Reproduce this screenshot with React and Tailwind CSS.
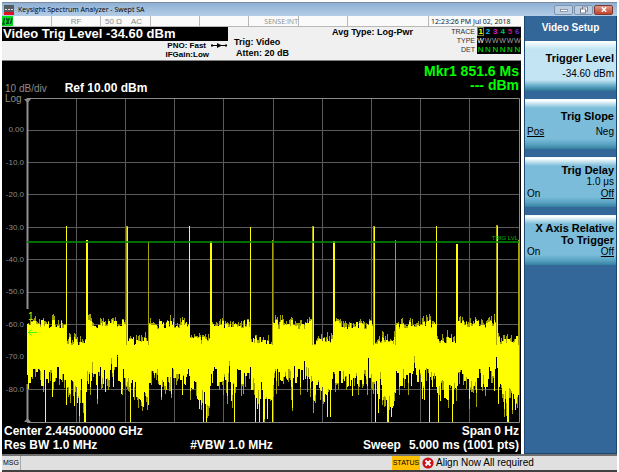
import React from "react";

const LEFT = 27;
const RIGHT = 519;
const TOP = 98;
const BOTTOM = 422;
const GRID_W = (RIGHT - LEFT) / 10;
const GRID_H = (BOTTOM - TOP) / 10;

const SPIKES = [
  { x: 66, y: 226, w: 1 },
  { x: 86, y: 240, w: 2 },
  { x: 126, y: 226, w: 2, dim: true },
  { x: 148, y: 241, w: 1, dim: true },
  { x: 189, y: 226, w: 1 },
  { x: 210, y: 241, w: 2 },
  { x: 250, y: 227, w: 1 },
  { x: 272, y: 240, w: 1, dim: true },
  { x: 312, y: 226, w: 2, dim: true },
  { x: 333, y: 241, w: 2 },
  { x: 373, y: 226, w: 2, dim: true },
  { x: 395, y: 240, w: 1, dim: true },
  { x: 436, y: 226, w: 1 },
  { x: 456, y: 244, w: 2 },
  { x: 496, y: 225, w: 2, dim: true },
  { x: 518, y: 240, w: 1, dim: true },
];

const QUIET = [
  [66, 86],
  [128, 148],
  [190, 209],
  [251, 271],
  [314, 332],
  [375, 395],
  [437, 456],
  [498, 518],
];

const DROPS = [45, 84, 85, 130, 203, 206, 234, 255, 259, 263, 272, 375, 387, 388, 429, 438, 452, 507, 508];

function makeTrace() {
  let seed = 48271;
  const rnd = () => {
    seed = (seed * 16807) % 2147483647;
    return seed / 2147483647;
  };
  let bright = "";
  let dim = "";
  let hold = 0;
  let level = 0.5;
  let topLevel = 0.5;
  for (let x = LEFT; x < RIGHT; x++) {
    const span = QUIET.find(([a, b]) => x >= a && x <= b);
    const t = span ? (x - span[0]) / (span[1] - span[0]) : 0;
    if (hold <= 0) {
      level = rnd();
      topLevel = rnd();
      hold = 1 + Math.floor(rnd() * 2.4);
    }
    hold -= 1;
    const kind = rnd();
    const top = Math.round(span ? 336 + topLevel * 9 : 320 + topLevel * 9);
    let bottom = span ? 376 + t * 12 + level * 22 : 367 + level * 21;
    if (kind > 0.86) bottom += 6 + rnd() * 16;
    if (kind < 0.07) bottom -= 12;
    bottom = Math.min(419, Math.round(bottom));
    if (DROPS.includes(x)) bottom = 422;
    const tip = rnd();
    const edgeTop = top - Math.round(tip * tip * 7);
    const edgeBottom = Math.min(422, bottom + (rnd() > 0.55 ? Math.round(rnd() * 14) : 0));
    bright += `M${x} ${top}h1V${bottom}h-1z`;
    dim += `M${x} ${edgeTop}h1V${edgeBottom}h-1z`;
  }
  return { bright, dim };
}

const TRACE = makeTrace();

function Chart() {
  const lines = Array.from({ length: 9 }, (_, i) => i + 1);
  return (
    <svg viewBox="2 93 519 331" className="block h-auto w-full" role="img" aria-label="Swept SA trace">
      <g stroke="#5a5a5a" strokeWidth="1">
        {lines.map((i) => (
          <line key={"v" + i} x1={Math.floor(LEFT + i * GRID_W) + 0.5} x2={Math.floor(LEFT + i * GRID_W) + 0.5} y1={TOP} y2={BOTTOM} />
        ))}
        {lines.map((i) => (
          <line key={"h" + i} x1={LEFT} x2={RIGHT} y1={Math.floor(TOP + i * GRID_H - 0.4) + 0.5} y2={Math.floor(TOP + i * GRID_H - 0.4) + 0.5} />
        ))}
      </g>
      <path d="M27 98.5H519.5V422.5H27" fill="none" stroke="#8a8a8a" />
      <path d="M27.5 98V309M27.5 384V422" stroke="#909090" strokeWidth="2" />
      <path d="M24 99h7l-3.5 4zM24 422h7l-3.5-4z" fill="#8a8a8a" />
      <g fill="#8c8c8c" className="font-['Liberation_Sans',sans-serif] text-[8px]">
        <text x="5" y="102" className="text-[10px]">Log</text>
        {lines.map((i) => (
          <text key={i} x="24" y={Math.round(TOP + i * GRID_H) + 2} textAnchor="end">
            {i === 1 ? "0.00" : ((1 - i) * 10).toFixed(1)}
          </text>
        ))}
      </g>
      <path d={TRACE.dim} fill="#a3a300" shapeRendering="crispEdges" />
      <path d={TRACE.bright} fill="#ffff00" shapeRendering="crispEdges" />
      <g shapeRendering="crispEdges">
        {SPIKES.map((s) => (
          <g key={s.x}>
            <rect x={s.x} y={s.y} width={s.w} height={345 - s.y} fill={s.dim ? "#a8a300" : "#ffff00"} />
            {s.dim && s.w === 2 && <rect x={s.x + 1} y={s.y + 1} width="1" height={344 - s.y} fill="#ffff00" />}
          </g>
        ))}
      </g>
      <rect x="27" y="241" width="492" height="2" fill="#008a00" fillOpacity="0.8" />
      <text x="518" y="240" textAnchor="end" fill="#00b400" className="font-['Liberation_Sans',sans-serif] text-[6px]">
        TRIG LVL
      </text>
      <text x="28" y="320" fill="#e6e600" className="font-['Liberation_Sans',sans-serif] text-[10px]">1</text>
      <path d="M37 332.5H28.5M31.5 329.5l-3 3l3 3" fill="none" stroke="#35ff00" />
    </svg>
  );
}

function Softkey({ title, value, options, picked, active }) {
  return (
    <button
      type="button"
      className={
        "flex h-[50px] w-full flex-col justify-center px-[2px] text-right text-[10px] leading-[12px] text-black " +
        (active
          ? "bg-[linear-gradient(#ffffff_0%,#c3e5f3_16%,#c3e5f3_78%,#5fa9c6_90%,#2c7596_100%)]"
          : "bg-[linear-gradient(#e9f5fa_0%,#ffffff_3%,#7abcd9_18%,#7abcd9_80%,#559fbe_92%,#357fa0_100%)]")
      }
    >
      <span className="block w-full text-[11px] font-bold whitespace-pre-line">{title}</span>
      {value && <span className={"block w-full " + (active ? "pt-1" : "")}>{value}</span>}
      {options && (
        <span className={"flex w-full justify-between " + (title === "Trig Slope" ? "pt-1" : "")}>
          {options.map((o) => (
            <span key={o} className={o === picked ? "underline" : ""}>
              {o}
            </span>
          ))}
        </span>
      )}
    </button>
  );
}

const TRACE_COLORS = ["text-[#ffff00]", "text-[#00c8e6]", "text-[#d020d0]", "text-[#00c070]", "text-[#d01060]", "text-[#5830e8]"];

function TitleBar() {
  const control = "flex h-[10px] w-[19px] items-center justify-center rounded-[2px] border";
  return (
    <header className="flex h-[14px] items-center border-t border-[#7b8ca0] bg-[linear-gradient(#8fb0d4,#b4cde6)] pr-1 pl-[2px]">
      <svg viewBox="0 0 10 10" className="h-[10px] w-[10px]" aria-hidden="true">
        <rect width="10" height="7" fill="#555a60" />
        <path d="M1 4.5h2M4 4.5h2M7 4.5h2" stroke="#e0e0e0" />
        <rect y="7" width="10" height="3" fill="#e01020" />
      </svg>
      <h1 className="flex-1 pl-1 font-['Open_Sans',sans-serif] text-[7px] leading-[12px] text-black">Keysight Spectrum Analyzer - Swept SA</h1>
      <div className="flex gap-px">
        <button type="button" aria-label="Minimize" className={control + " border-[#8094ad] bg-[#b9cde3]"}>
          <svg viewBox="0 0 8 6" className="h-[6px] w-[8px]"><rect x="0.5" y="2.5" width="7" height="2" fill="#fff" stroke="#667" strokeWidth="0.6" /></svg>
        </button>
        <button type="button" aria-label="Restore" className={control + " border-[#8094ad] bg-[#b9cde3]"}>
          <svg viewBox="0 0 8 8" className="h-[8px] w-[8px]" fill="#fff" stroke="#667" strokeWidth="0.8"><rect x="2.5" y="1" width="5" height="4" /><rect x="0.5" y="3" width="5" height="4" /></svg>
        </button>
        <button type="button" aria-label="Close" className={control + " border-[#7d3a30] bg-[linear-gradient(#dc9a8c,#c4412a)]"}>
          <svg viewBox="0 0 8 8" className="h-[7px] w-[8px]"><path d="M1.5 1.5l5 5M6.5 1.5l-5 5" stroke="#fff" strokeWidth="1.8" /></svg>
        </button>
      </div>
    </header>
  );
}

function InfoRow() {
  const cell = "border-r border-[#b8b8b8]";
  return (
    <div className="flex h-[11px] border-b border-[#b8b8b8] bg-[#fafafa] text-[8px] leading-[11px] text-[#8a8a8a]">
      <div className={cell + " w-[50px]"}>
        <div className="h-[10px] w-[11px] bg-[#00e020]">
          <svg viewBox="0 0 11 10" className="h-[10px] w-[11px]" fill="none" stroke="#042" strokeWidth="1.4" aria-hidden="true">
            <path d="M2.5 2L1 8h2M4.5 2l2 6M7.5 2l-3 6M10 2L8.5 8" />
          </svg>
        </div>
      </div>
      <div className={cell + " w-[49px] text-center"}>RF</div>
      <div className={cell + " flex w-[50px] justify-between pr-2 pl-1"}>
        <span>50 Ω</span>
        <span>AC</span>
      </div>
      <div className={cell + " w-[49px]"} />
      <div className={cell + " w-[49px]"} />
      <div className={cell + " w-[50px] text-right font-['Open_Sans',sans-serif] text-[7px]"}>SENSE:INT</div>
      <div className={cell + " w-[49px]"} />
      <div className={cell + " flex-1"} />
      <div className="w-[92px] pl-[2px] font-['Noto_Sans',sans-serif] text-[7px] whitespace-nowrap text-[#222]">12:23:26 PM Jul 02, 2018</div>
    </div>
  );
}

function Settings() {
  return (
    <div className="flex h-[34px] border-b border-[#808080] bg-[#f0f0f0] text-[9px] leading-[11px] font-bold text-black">
      <div className="w-[226px]">
        <div className="h-[14px] bg-black pl-px text-[13px] leading-[14px] whitespace-nowrap text-white">Video Trig Level -34.60 dBm</div>
        <div className="flex items-start justify-end text-[8px] leading-[9px]">
          <div className="text-right">
            <div className="pr-1">PNO: Fast</div>
            <div className="pr-px">IFGain:Low</div>
          </div>
          <svg viewBox="0 0 18 9" className="h-[9px] w-[18px]" aria-hidden="true">
            <path d="M2 4.5h14" stroke="#000" />
            <path d="M1 3.5h2v2H1zM7 2l5 2.5L7 7zM15 3.5h2v2h-2z" fill="#000" />
          </svg>
        </div>
      </div>
      <div className="flex-1 pt-[10px] pl-[6px] whitespace-nowrap">
        <div>Trig: Video</div>
        <div className="pl-[2px]">Atten: 20 dB</div>
      </div>
      <div className="w-[121px] whitespace-nowrap">Avg Type: Log-Pwr</div>
      <div className="flex w-[68px] gap-[2px]">
        <div className="flex w-[22px] flex-col items-end text-[7px] leading-[9px] font-normal text-[#333]">
          <div>TRACE</div>
          <div>TYPE</div>
          <div>DET</div>
        </div>
        <div className="w-[44px] self-start bg-black text-[8px] leading-[9px]">
          <div className="grid grid-cols-6 text-center">
            {TRACE_COLORS.map((c, i) => (
              <span key={c} className={c + (i === 0 ? " outline outline-1 -outline-offset-1 outline-[#6f8f30]" : "")}>
                {i + 1}
              </span>
            ))}
          </div>
          <div className="grid grid-cols-6 text-center text-[7px] font-normal text-[#a0a0a0]">
            {TRACE_COLORS.map((c, i) => (
              <span key={c} className={i === 0 ? "text-white" : ""}>W</span>
            ))}
          </div>
          <div className="grid grid-cols-6 text-center font-normal text-[#00f000]">
            {TRACE_COLORS.map((c) => (
              <span key={c}>N</span>
            ))}
          </div>
        </div>
      </div>
    </div>
  );
}

export default function App() {
  return (
    <div className="bg-white pt-[2px] pr-[2px] pl-[2px] font-['Liberation_Sans',Arial,sans-serif]">
      <TitleBar />
      <div className="flex">
        <main className="min-w-0 flex-1">
          <InfoRow />
          <Settings />
          <section className="bg-black text-white">
            <div className="flex h-8 items-start justify-between">
              <div className="flex items-baseline gap-[18px] pt-[22px] pl-[3px]">
                <span className="text-[10px] leading-[10px] text-[#8c8c8c]">10 dB/div</span>
                <span className="text-[12px] leading-[10px] font-bold">Ref 10.00 dBm</span>
              </div>
              <div className="pt-[3px] pr-[2px] text-right text-[14px] leading-[14px] font-bold text-[#00ff00]">
                <div>Mkr1 851.6 Ms</div>
                <div>--- dBm</div>
              </div>
            </div>
            <Chart />
            <div className="grid h-[30px] grid-cols-[1fr_auto_1fr] px-[2px] text-[12px] leading-[14px] font-bold whitespace-nowrap">
              <div>
                <div>Center 2.445000000 GHz</div>
                <div>Res BW 1.0 MHz</div>
              </div>
              <div className="self-start pt-[14px] pr-[60px]">#VBW 1.0 MHz</div>
              <div className="text-right">
                <div>Span 0 Hz</div>
                <div>
                  Sweep<span className="pl-2">5.000 ms (1001 pts)</span>
                </div>
              </div>
            </div>
          </section>
        </main>
        <aside className="ml-[3px] flex w-[93px] flex-col gap-2 border-x border-b border-[#1d4670] bg-[#336699]">
          <h2 className="-mb-2 h-[25px] pt-[5px] text-center text-[10px] leading-[14px] font-bold text-white">Video Setup</h2>
          <Softkey title="Trigger Level" value="-34.60 dBm" active />
          <Softkey title="Trig Slope" options={["Pos", "Neg"]} picked="Pos" />
          <Softkey title="Trig Delay" value="1.0 μs" options={["On", "Off"]} picked="Off" />
          <Softkey title={"X Axis Relative\nTo Trigger"} options={["On", "Off"]} picked="Off" />
        </aside>
      </div>
      <footer className="flex h-[18px] items-stretch border-t-2 border-b-2 border-t-[#707070] border-b-[#404040] bg-[#e0e0e0] text-[7px] leading-[14px] text-black">
        <div className="w-[19px] border-r border-[#a8a8a8] pl-px">MSG</div>
        <div className="flex-1" />
        <div className="w-[28px] bg-[#ffc000] text-center">STATUS</div>
        <div className="flex w-[197px] items-center gap-[2px] pl-[2px] text-[10px]">
          <svg viewBox="0 0 12 12" className="h-[12px] w-[12px]" aria-hidden="true">
            <circle cx="6" cy="6" r="5.6" fill="#cc1118" />
            <path d="M3.5 3.5l5 5M8.5 3.5l-5 5" stroke="#fff" strokeWidth="2" />
          </svg>
          <span>Align Now All required</span>
        </div>
      </footer>
    </div>
  );
}
